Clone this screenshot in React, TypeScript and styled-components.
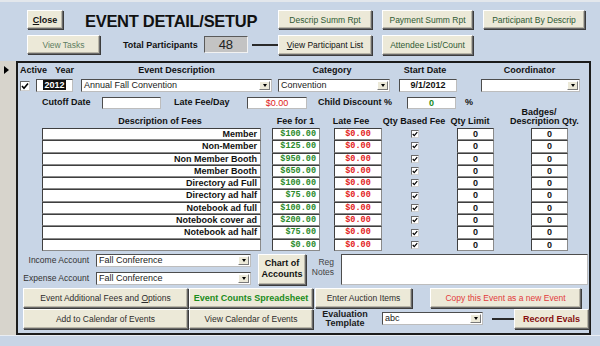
import React from "react";
import styled, { createGlobalStyle } from "styled-components";

const BLUE = "#c8d5e6";
const FACE = "#ece9d8";

const GlobalStyle = createGlobalStyle`
  html, body {
    margin: 0;
    padding: 0;
    background: ${BLUE};
  }
  body {
    font-family: "Liberation Sans", Arial, sans-serif;
    color: #111;
  }
  * {
    box-sizing: border-box;
  }
`;

const Screen = styled.div`
  width: 600px;
  height: 346px;
  display: flex;
  flex-direction: column;
  background: ${BLUE};
  border-top: 2px solid #e3e7ec;
  overflow: hidden;
`;

/* ---------- header ---------- */

const Header = styled.header`
  height: 59px;
  flex: none;
  display: flex;
  padding: 8px 0 0 27px;
`;

const HeaderLeft = styled.div`
  width: 251px;
  display: grid;
  grid-template-rows: 19px 19px;
  row-gap: 6px;
`;

const HeaderLine = styled.div`
  display: flex;
  align-items: center;
`;

const Title = styled.h1`
  margin: 0 0 0 22px;
  padding-top: 4px;
  font-size: 16.5px;
  line-height: 19px;
  font-weight: bold;
  letter-spacing: -0.3px;
  color: #111;
  white-space: nowrap;
`;

const TotalLabel = styled.span`
  margin-left: 23px;
  font-size: 9px;
  font-weight: bold;
  white-space: nowrap;
`;

const CountBox = styled.div`
  margin-left: 6px;
  width: 44px;
  height: 17px;
  background: #c3c3c3;
  border: 1px solid;
  border-color: #5a5a5a #f2f2f2 #f2f2f2 #5a5a5a;
  font-size: 13px;
  line-height: 15px;
  text-align: center;
  color: #222;
`;

const Connector = styled.div<{ $w: number }>`
  width: ${(p) => p.$w}px;
  height: 2px;
  margin-left: auto;
  background: #2a2a2a;
  flex: none;
`;

const HeaderRight = styled.div`
  display: grid;
  grid-template-columns: 94px 91px 102px;
  grid-template-rows: 19px 20px;
  column-gap: 10px;
  row-gap: 6px;
  align-content: start;
`;

type Tone = "plain" | "rpt" | "muted" | "black" | "green" | "red" | "darkred";

const toneColor: Record<Tone, string> = {
  plain: "#2c2c2c",
  rpt: "#2f5a33",
  muted: "#5f7f62",
  black: "#111",
  green: "#1b8c1b",
  red: "#e23b3b",
  darkred: "#861010",
};

const Btn = styled.button<{ $w?: number; $tone?: Tone; $bold?: boolean; $ml?: number }>`
  width: ${(p) => (p.$w ? `${p.$w}px` : "auto")};
  height: 100%;
  margin: 0 0 0 ${(p) => p.$ml ?? 0}px;
  padding: 0 2px;
  flex: none;
  background: ${FACE};
  border: 1px solid;
  border-color: #ffffff #6a6a6a #6a6a6a #ffffff;
  box-shadow: inset -1px -1px 0 #b9b6a8, 1px 1px 0 #3c3c3c;
  font-family: "Liberation Sans", Arial, sans-serif;
  font-size: ${(p) => (p.$bold ? 9 : 8.5)}px;
  font-weight: ${(p) => (p.$bold ? "bold" : "normal")};
  line-height: 10px;
  color: ${(p) => toneColor[p.$tone ?? "plain"]};
  white-space: nowrap;
  cursor: pointer;
`;

/* ---------- body ---------- */

const Body = styled.div`
  flex: 1;
  min-height: 0;
  display: flex;
`;

const RecordSelector = styled.div`
  width: 16px;
  flex: none;
  background: #d7d4cc;
  padding: 5px 0 0 4px;
`;

const Pointer = styled.span`
  display: block;
  width: 0;
  height: 0;
  border-left: 5px solid #000;
  border-top: 4px solid transparent;
  border-bottom: 4px solid transparent;
`;

const Detail = styled.section`
  width: 575px;
  flex: none;
  border: 2px solid #1b1b1b;
  display: flex;
  flex-direction: column;
  padding-top: 1px;
`;

const Footer = styled.div`
  height: 11px;
  flex: none;
  border-top: 1px solid #e9edf3;
`;

/* ---------- top fields ---------- */

const TopGrid = styled.div`
  display: grid;
  grid-template-columns: 18px 45px 197px 121px 82px 99px;
  grid-template-rows: 13px 13px;
  row-gap: 2px;
  align-items: center;
`;

const ColLabel = styled.div<{ $w?: number; $pl?: number; $align?: string }>`
  width: ${(p) => (p.$w ? `${p.$w}px` : "auto")};
  padding-left: ${(p) => p.$pl ?? 0}px;
  font-size: 9px;
  font-weight: bold;
  line-height: 13px;
  text-align: ${(p) => p.$align ?? "center"};
  white-space: nowrap;
`;

const Field = styled.div<{ $w: number; $h?: number; $color?: string; $align?: string; $bold?: boolean }>`
  width: ${(p) => p.$w}px;
  height: ${(p) => p.$h ?? 13}px;
  background: #fff;
  border: 1px solid;
  border-color: #4d4d4d #bdbdbd #bdbdbd #4d4d4d;
  font-size: 9px;
  font-weight: ${(p) => (p.$bold ? "bold" : "normal")};
  line-height: ${(p) => (p.$h ?? 13) - 2}px;
  color: ${(p) => p.$color ?? "#111"};
  text-align: ${(p) => p.$align ?? "left"};
  padding: 0 2px;
  white-space: nowrap;
  overflow: hidden;
`;

const Selected = styled.span`
  background: #111;
  color: #fff;
  font-weight: bold;
  padding: 0 1px;
`;

const ComboBox = styled.div<{ $w: number }>`
  width: ${(p) => p.$w}px;
  height: 13px;
  display: flex;
  background: #fff;
  border: 1px solid;
  border-color: #4d4d4d #bdbdbd #bdbdbd #4d4d4d;
`;

const ComboText = styled.span`
  flex: 1;
  padding-left: 2px;
  font-size: 9px;
  line-height: 11px;
  color: #1a1a1a;
  white-space: nowrap;
  overflow: hidden;
`;

const DropButton = styled.span`
  width: 11px;
  height: 9px;
  margin: 1px 1px 0 0;
  background: ${FACE};
  border: 1px solid;
  border-color: #fff #7a7a7a #7a7a7a #fff;
  display: flex;
  align-items: center;
  justify-content: center;
  &::after {
    content: "";
    border-top: 3px solid #000;
    border-left: 2px solid transparent;
    border-right: 2px solid transparent;
  }
`;

const Check = styled.span<{ $size: number }>`
  width: ${(p) => p.$size}px;
  height: ${(p) => p.$size}px;
  background: #fff;
  border: 1px solid;
  border-color: #6a6a6a #d0d0d0 #d0d0d0 #6a6a6a;
  display: flex;
  align-items: center;
  justify-content: center;
  margin-left: 2px;
`;

function CheckMark({ size }: { size: number }) {
  return (
    <Check $size={size}>
      <svg width={size - 2} height={size - 2} viewBox="0 0 8 8">
        <path d="M1 4 L3 6.2 L7 1.5" stroke="#000" strokeWidth="1.6" fill="none" />
      </svg>
    </Check>
  );
}

function Combo({ w, text }: { w: number; text: string }) {
  return (
    <ComboBox $w={w}>
      <ComboText>{text}</ComboText>
      <DropButton />
    </ComboBox>
  );
}

const FieldsRow = styled.div`
  margin-top: 4px;
  padding-left: 24px;
  height: 12px;
  display: grid;
  grid-template-columns: 60px 72px 73px 71px 89px 58px 20px;
  align-items: center;
`;

/* ---------- fees table ---------- */

const FeesGrid = styled.div`
  padding-left: 24px;
  display: grid;
  grid-template-columns: 219px 59px 62px 64px 48px 74px;
  grid-template-rows: 20px repeat(10, 12.3px);
`;

const FeeHead = styled.div<{ $pl?: number }>`
  align-self: end;
  padding: 0 0 2px ${(p) => p.$pl ?? 0}px;
  font-size: 9px;
  font-weight: bold;
  line-height: 9px;
  text-align: center;
  white-space: nowrap;
`;

const Cell = styled.div<{ $w?: number; $color?: string; $align?: string; $mono?: boolean }>`
  width: ${(p) => (p.$w ? `${p.$w}px` : "100%")};
  justify-self: end;
  height: 100%;
  background: #fff;
  border: 1px solid;
  border-color: #3f3f3f #8a8a8a #8a8a8a #3f3f3f;
  font-family: ${(p) => (p.$mono ? '"Liberation Mono", monospace' : '"Liberation Sans", Arial, sans-serif')};
  font-size: ${(p) => (p.$mono ? 8.5 : 9)}px;
  font-weight: bold;
  line-height: 10px;
  color: ${(p) => p.$color ?? "#111"};
  text-align: ${(p) => p.$align ?? "center"};
  padding: 0 3px;
  white-space: nowrap;
  overflow: hidden;
`;

const CheckCell = styled.div`
  display: flex;
  align-items: center;
  justify-content: center;
`;

/* ---------- accounts ---------- */

const AccountsGrid = styled.div`
  margin-top: 3px;
  display: grid;
  grid-template-columns: 78px 155px 7px 48px 35px 247px;
  grid-template-rows: 13px 13px;
  row-gap: 5px;
  align-items: center;
`;

const AccountLabel = styled.div`
  grid-column: 1;
  padding-right: 7px;
  font-size: 8.5px;
  color: #333;
  text-align: right;
  white-space: nowrap;
`;

const AccountCombo = styled.div`
  grid-column: 2;
`;

const ChartButton = styled(Btn)`
  grid-column: 4;
  grid-row: 1 / span 2;
  height: 31px;
  white-space: normal;
  line-height: 11px;
`;

const NotesLabel = styled.div`
  grid-column: 5;
  grid-row: 1 / span 2;
  align-self: start;
  padding: 3px 7px 0 0;
  font-size: 8.5px;
  line-height: 10px;
  color: #444;
  text-align: right;
`;

const NotesBox = styled.div`
  grid-column: 6;
  grid-row: 1 / span 2;
  height: 31px;
  background: #fff;
  border: 1px solid;
  border-color: #4d4d4d #bdbdbd #bdbdbd #4d4d4d;
`;

/* ---------- action buttons ---------- */

const Actions = styled.div`
  margin-top: 3px;
  padding-left: 5px;
  display: grid;
  grid-template-rows: 20px 20px;
  row-gap: 1px;
`;

const ActionRow = styled.div`
  display: flex;
  align-items: center;
  height: 20px;
`;

const EvalLabel = styled.div`
  width: 50px;
  margin-left: 7px;
  font-size: 9px;
  font-weight: bold;
  line-height: 9px;
  text-align: center;
  color: #1a1a1a;
`;

const ComboSlot = styled.div`
  margin-left: 12px;
`;

const fees: [string, string][] = [
  ["Member", "$100.00"],
  ["Non-Member", "$125.00"],
  ["Non Member Booth", "$950.00"],
  ["Member Booth", "$650.00"],
  ["Directory ad Full", "$100.00"],
  ["Directory ad half", "$75.00"],
  ["Notebook ad full", "$100.00"],
  ["Notebook cover ad", "$200.00"],
  ["Notebook ad half", "$75.00"],
  ["", "$0.00"],
];

export default function App() {
  return (
    <>
      <GlobalStyle />
      <Screen>
        <Header>
          <HeaderLeft>
            <HeaderLine>
              <Btn $w={36} $tone="black" $bold>
                <u>C</u>lose
              </Btn>
              <Title>EVENT DETAIL/SETUP</Title>
            </HeaderLine>
            <HeaderLine>
              <Btn $w={73} $tone="muted">
                View Tasks
              </Btn>
              <TotalLabel>Total Participants</TotalLabel>
              <CountBox>48</CountBox>
              <Connector $w={26} />
            </HeaderLine>
          </HeaderLeft>
          <HeaderRight>
            <Btn $tone="rpt">Descrip Summ Rpt</Btn>
            <Btn $tone="rpt">Payment Summ Rpt</Btn>
            <Btn $tone="rpt">Participant By Descrip</Btn>
            <Btn $tone="black">
              <u>V</u>iew Participant List
            </Btn>
            <Btn $tone="rpt">Attendee List/Count</Btn>
          </HeaderRight>
        </Header>

        <Body>
          <RecordSelector>
            <Pointer />
          </RecordSelector>
          <Detail>
            <TopGrid>
              <ColLabel $pl={2} $align="left">
                Active
              </ColLabel>
              <ColLabel $pl={19} $align="left">
                Year
              </ColLabel>
              <ColLabel $w={191}>Event Description</ColLabel>
              <ColLabel $w={108}>Category</ColLabel>
              <ColLabel $w={52}>Start Date</ColLabel>
              <ColLabel $w={97}>Coordinator</ColLabel>

              <CheckMark size={10} />
              <Field $w={37} $align="center">
                <Selected>2012</Selected>
              </Field>
              <Combo w={191} text="Annual Fall Convention" />
              <Combo w={112} text="Convention" />
              <Field $w={58} $align="center" $bold>
                9/1/2012
              </Field>
              <Combo w={99} text="" />
            </TopGrid>

            <FieldsRow>
              <ColLabel $align="left">Cutoff Date</ColLabel>
              <Field $w={59} $h={12} />
              <ColLabel $align="left">Late Fee/Day</ColLabel>
              <Field $w={60} $h={12} $align="center" $color="#e02020">
                $0.00
              </Field>
              <ColLabel $align="left">Child Discount %</ColLabel>
              <Field $w={49} $h={12} $align="center" $color="#1b8c1b" $bold>
                0
              </Field>
              <ColLabel $align="left">%</ColLabel>
            </FieldsRow>

            <FeesGrid>
              <FeeHead $pl={17}>Description of Fees</FeeHead>
              <FeeHead $pl={10}>Fee for 1</FeeHead>
              <FeeHead>Late Fee</FeeHead>
              <FeeHead>Qty Based Fee</FeeHead>
              <FeeHead>Qty Limit</FeeHead>
              <FeeHead $pl={16}>
                Badges/
                <br />
                Description Qty.
              </FeeHead>

              {fees.map(([name, fee], i) => (
                <React.Fragment key={i}>
                  <Cell $align="right">{name}</Cell>
                  <Cell $w={48} $mono $align="right" $color="#2a8a2a">
                    {fee}
                  </Cell>
                  <Cell $w={48} $mono $color="#e31b1b">
                    $0.00
                  </Cell>
                  <CheckCell>
                    <CheckMark size={8} />
                  </CheckCell>
                  <Cell $w={37}>0</Cell>
                  <Cell $w={37}>0</Cell>
                </React.Fragment>
              ))}
            </FeesGrid>

            <AccountsGrid>
              <AccountLabel>Income Account</AccountLabel>
              <AccountCombo>
                <Combo w={155} text="Fall Conference" />
              </AccountCombo>
              <ChartButton $tone="black" $bold>
                Chart of Accounts
              </ChartButton>
              <NotesLabel>
                Reg
                <br />
                Notes
              </NotesLabel>
              <NotesBox />
              <AccountLabel>Expense Account</AccountLabel>
              <AccountCombo>
                <Combo w={155} text="Fall Conference" />
              </AccountCombo>
            </AccountsGrid>

            <Actions>
              <ActionRow>
                <Btn $w={165}>
                  Event Additional Fees and <u>O</u>ptions
                </Btn>
                <Btn $w={124} $ml={1} $tone="green" $bold>
                  Event Counts Spreadsheet
                </Btn>
                <Btn $w={97} $ml={2}>
                  Enter Auction Items
                </Btn>
                <Btn $w={151} $ml={18} $tone="red">
                  Copy this Event as a new Event
                </Btn>
              </ActionRow>
              <ActionRow>
                <Btn $w={165}>Add to Calendar of Events</Btn>
                <Btn $w={124} $ml={1}>
                  View Calendar of Events
                </Btn>
                <EvalLabel>
                  Evaluation
                  <br />
                  Template
                </EvalLabel>
                <ComboSlot>
                  <Combo w={101} text="abc" />
                </ComboSlot>
                <Connector $w={22} />
                <Btn $w={75} $tone="darkred" $bold>
                  Record Evals
                </Btn>
              </ActionRow>
            </Actions>
          </Detail>
        </Body>
        <Footer />
      </Screen>
    </>
  );
}
